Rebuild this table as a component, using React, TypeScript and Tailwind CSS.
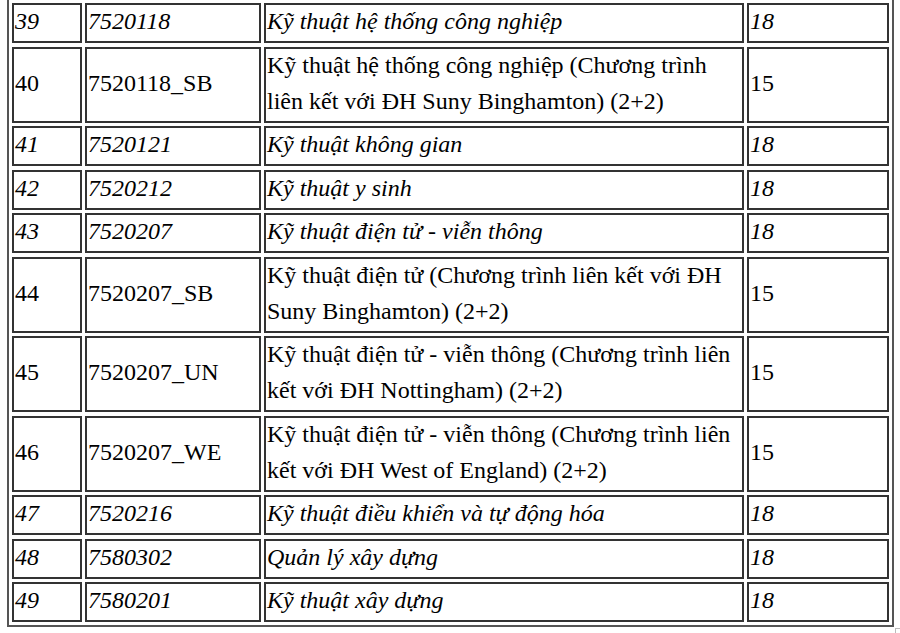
type Row = {
  stt: string;
  code: string;
  name: string[];
  quota: string;
  italic: boolean;
};

const rows: Row[] = [
  { stt: "39", code: "7520118", name: ["Kỹ thuật hệ thống công nghiệp"], quota: "18", italic: true },
  {
    stt: "40",
    code: "7520118_SB",
    name: ["Kỹ thuật hệ thống công nghiệp (Chương trình", "liên kết với ĐH Suny Binghamton) (2+2)"],
    quota: "15",
    italic: false,
  },
  { stt: "41", code: "7520121", name: ["Kỹ thuật không gian"], quota: "18", italic: true },
  { stt: "42", code: "7520212", name: ["Kỹ thuật y sinh"], quota: "18", italic: true },
  { stt: "43", code: "7520207", name: ["Kỹ thuật điện tử - viễn thông"], quota: "18", italic: true },
  {
    stt: "44",
    code: "7520207_SB",
    name: ["Kỹ thuật điện tử (Chương trình liên kết với ĐH", "Suny Binghamton) (2+2)"],
    quota: "15",
    italic: false,
  },
  {
    stt: "45",
    code: "7520207_UN",
    name: ["Kỹ thuật điện tử - viễn thông (Chương trình liên", "kết với ĐH Nottingham) (2+2)"],
    quota: "15",
    italic: false,
  },
  {
    stt: "46",
    code: "7520207_WE",
    name: ["Kỹ thuật điện tử - viễn thông (Chương trình liên", "kết với ĐH West of England) (2+2)"],
    quota: "15",
    italic: false,
  },
  { stt: "47", code: "7520216", name: ["Kỹ thuật điều khiển và tự động hóa"], quota: "18", italic: true },
  { stt: "48", code: "7580302", name: ["Quản lý xây dựng"], quota: "18", italic: true },
  { stt: "49", code: "7580201", name: ["Kỹ thuật xây dựng"], quota: "18", italic: true },
];

function Cell({ italic, lines }: { italic: boolean; lines: string[] }) {
  return (
    <div
      className={
        italic
          ? "flex items-center overflow-hidden whitespace-nowrap border-2 border-[#333333] pl-px font-['Liberation_Serif'] text-[24px] italic leading-[36px] text-black"
          : "flex items-center overflow-hidden whitespace-nowrap border-2 border-[#333333] pl-px font-['Liberation_Serif'] text-[24px] leading-[36px] text-black"
      }
    >
      <div className="-translate-y-[2px]">
        {lines.map((line, i) => (
          <div key={i}>{line}</div>
        ))}
      </div>
    </div>
  );
}

export default function App() {
  return (
    <div className="relative h-[633px] w-[900px] overflow-hidden bg-white pl-[7px] font-['Liberation_Serif']">
      <div className="-mt-[2px] grid w-[887px] grid-cols-[70px_176px_480px_142px] gap-x-[3px] gap-y-[3.5px] border-2 border-[#555555] p-[3px]">
        {rows.map((r) => [
          <Cell key={r.stt + "a"} italic={r.italic} lines={[r.stt]} />,
          <Cell key={r.stt + "b"} italic={r.italic} lines={[r.code]} />,
          <Cell key={r.stt + "c"} italic={r.italic} lines={r.name} />,
          <Cell key={r.stt + "d"} italic={r.italic} lines={[r.quota]} />,
        ])}
      </div>
      <div className="absolute left-[895px] top-[628px] h-[6px] w-[6px] border-l border-t border-[#bbbbbb]" />
    </div>
  );
}
